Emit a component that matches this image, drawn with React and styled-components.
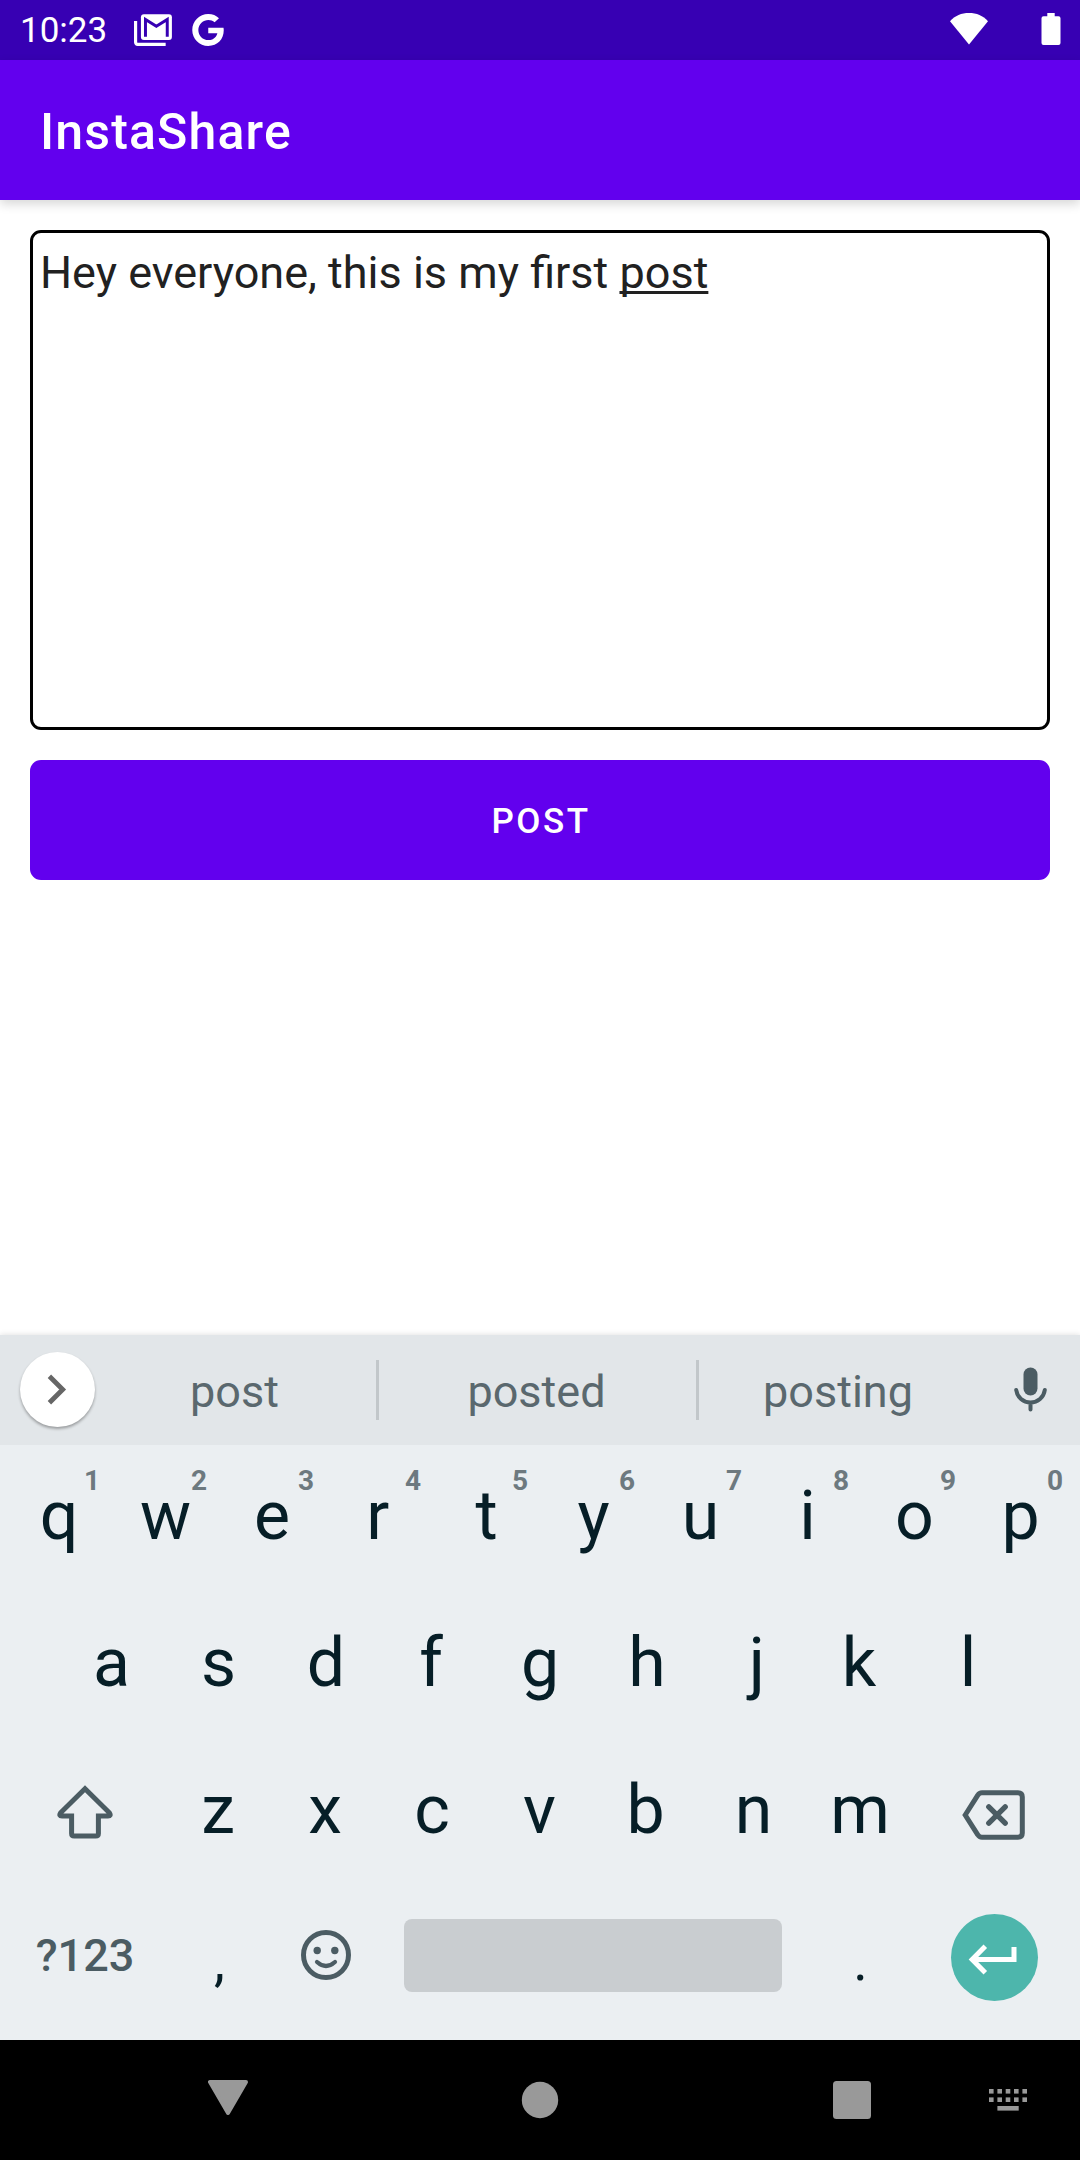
import React from "react";
import styled, { createGlobalStyle } from "styled-components";

const Global = createGlobalStyle`
  *, *::before, *::after { box-sizing: border-box; }
  html, body { margin: 0; padding: 0; }
  body { background: #fff; font-family: Roboto, "Liberation Sans", sans-serif; }
  svg { display: block; flex: none; }
  button { border: 0; margin: 0; padding: 0; background: none; font: inherit; color: inherit; }
`;

const Screen = styled.div`
  width: 1080px;
  height: 2160px;
  display: flex;
  flex-direction: column;
  background: #fff;
  overflow: hidden;
`;

const StatusBar = styled.header`
  height: 60px;
  flex: none;
  display: flex;
  align-items: center;
  justify-content: space-between;
  padding: 0 19px 0 20px;
  background: #3700b3;
  color: #fff;
`;

const StatusGroup = styled.div`
  display: flex;
  align-items: center;
  gap: ${(p) => p.$gap}px;
  padding-bottom: ${(p) => p.$lift || 0}px;
`;

const Clock = styled.span`
  width: 94px;
  font-size: 35px;
  line-height: 60px;
  padding-top: 2px;
`;

const AppBar = styled.div`
  height: 140px;
  flex: none;
  display: flex;
  align-items: center;
  padding: 4px 40px 0;
  background: #6200ee;
  color: #fff;
  box-shadow: 0 4px 10px rgba(0, 0, 0, 0.16);
`;

const Title = styled.h1`
  margin: 0;
  font-size: 50px;
  line-height: 60px;
  font-weight: 500;
  letter-spacing: 1.15px;
`;

const Content = styled.main`
  flex: 1;
  display: flex;
  flex-direction: column;
  gap: 30px;
  padding: 30px;
`;

const PostInput = styled.div`
  height: 500px;
  padding: 10px 7px;
  border: 3px solid #000;
  border-radius: 11px;
  color: #212121;
  font-size: 45px;
  line-height: 60px;
`;

const Composing = styled.span`
  text-decoration: underline;
  text-decoration-thickness: 2.5px;
  text-underline-offset: 3px;
  text-decoration-skip-ink: none;
`;

const PostButton = styled.button`
  height: 120px;
  padding: 4px 0 0 2px;
  border-radius: 11px;
  background: #6200ee;
  color: #fff;
  font-size: 35px;
  font-weight: 500;
  letter-spacing: 2.5px;
  line-height: 40px;
`;

const Keyboard = styled.section`
  flex: none;
  height: 705px;
  background: #ebeff2;
  box-shadow: 0 0 6px rgba(0, 0, 0, 0.14);
`;

const SuggestionStrip = styled.div`
  height: 110px;
  display: grid;
  grid-template-columns: 75px 281px 3px 317px 3px 278px 106px;
  align-items: center;
  padding-left: 20px;
  background: #e2e6e9;
`;

const ExpandButton = styled.button`
  width: 75px;
  height: 75px;
  margin-bottom: 1px;
  border-radius: 50%;
  background: #fff;
  box-shadow: 0 2px 3px rgba(0, 0, 0, 0.32);
`;

const Suggestion = styled.button`
  height: 110px;
  padding: 3px ${(p) => p.$trail || 0}px 0 0;
  color: #5a686e;
  font-size: 45px;
  line-height: 60px;
`;

const Divider = styled.span`
  height: 60px;
  background: #c2c7ca;
`;

const MicButton = styled.button`
  display: grid;
  justify-content: center;
  padding-bottom: 2px;
`;

const KeyRow = styled.div`
  height: 147px;
  display: flex;
  padding: 0 ${(p) => p.$inset || 5}px;
`;

const KeyCap = styled.button`
  position: relative;
  width: ${(p) => p.$w || 107}px;
  height: 147px;
  flex: none;
  display: flex;
  justify-content: center;
  align-items: flex-start;
  padding-left: ${(p) => (p.$nudge > 0 ? p.$nudge * 2 : 0)}px;
  padding-right: ${(p) => (p.$nudge < 0 ? p.$nudge * -2 : 0)}px;
  color: #061e27;
  font-size: 68px;
  line-height: 142px;
`;

const PunctuationKey = styled(KeyCap)`
  font-size: 55px;
  line-height: 150px;
`;

const Hint = styled.sup`
  position: absolute;
  top: 19px;
  left: 75px;
  width: 24px;
  text-align: center;
  color: #6d797f;
  font-size: 28px;
  font-weight: 700;
  line-height: 33px;
`;

const ActionKey = styled(KeyCap)`
  align-items: center;
  padding-top: ${(p) => p.$drop || 0}px;
  padding-bottom: ${(p) => p.$lift || 0}px;
  color: #4b5c63;
  font-size: 45px;
  font-weight: 500;
  line-height: 60px;
`;

const SpaceBar = styled.span`
  width: 378px;
  height: 73px;
  border-radius: 8px;
  background: #c9cdd0;
`;

const EnterDisc = styled.span`
  width: 87px;
  height: 87px;
  border-radius: 50%;
  background: #4db6ac;
`;

const NavBar = styled.nav`
  height: 120px;
  flex: none;
  display: grid;
  grid-template-columns: 72px 312px 312px 312px 72px;
  align-items: center;
  background: #000;
  color: #999;
`;

const NavButton = styled.button`
  display: grid;
  justify-content: center;
  grid-column: ${(p) => p.$col};
`;

const NavTail = styled.div`
  grid-column: 5;
  margin-left: -19px;
`;

const GmailStack = () => (
  <svg width="38" height="32" viewBox="0 0 38.400 32">
    <path d="M1.6 7V28.5a2 2 0 0 0 2 2H32" fill="none" stroke="#fff" strokeWidth="3.2" />
    <rect x="7" width="31.3" height="26" rx="3" fill="#fff" />
    <path d="M11.6 22.8V5.4L22.6 12.2L33.6 5.4V22.8" fill="none" stroke="#3700b3" strokeWidth="3" />
  </svg>
);

const GoogleG = () => (
  <svg width="32" height="32" viewBox="0 8 488 496">
    <path
      fill="#fff"
      d="M488 261.8C488 403.3 391.1 504 248 504 110.8 504 0 393.2 0 256S110.8 8 248 8c66.8 0 123 24.5 166.3 64.9l-67.5 64.9C258.5 52.6 94.3 116.6 94.3 256c0 86.5 69.1 156.6 153.7 156.6 98.2 0 135-70.4 140.8-106.9H248v-85.3h236.1c2.3 12.7 3.9 24.9 3.9 41.4z"
    />
  </svg>
);

const Wifi = () => (
  <svg width="38" height="34" viewBox="0 0 38 34">
    <path d="M0 9.2C5 3.6 11.5 1 19 1s14 2.6 19 8.2L19 32.6Z" fill="#fff" />
  </svg>
);

const Battery = () => (
  <svg width="20" height="32" viewBox="0 0 20 32">
    <path
      d="M6.3 0h7.4v3.3h3.8a2 2 0 0 1 2 2V30a2 2 0 0 1-2 2h-15a2 2 0 0 1-2-2V5.3a2 2 0 0 1 2-2h3.8z"
      fill="#fff"
    />
  </svg>
);

const Chevron = () => (
  <svg width="75" height="75" viewBox="0 0 75 75">
    <path d="M29.400 24.200L42.700 37.500L29.400 50.800" fill="none" stroke="#666" strokeWidth="4.800" />
  </svg>
);

const Mic = () => (
  <svg width="33" height="45" viewBox="0 0 33 45">
    <rect x="9.5" y="0.5" width="14" height="28" rx="7" fill="#4b5c63" />
    <path
      d="M2.2 23c1 7.500 7 12.500 14.300 12.500S29.800 30.500 30.800 23M16.500 35.500V42.400"
      fill="none"
      stroke="#4b5c63"
      strokeWidth="4"
      strokeLinecap="round"
    />
  </svg>
);

const Shift = () => (
  <svg width="56" height="55" viewBox="0 0 56 55">
    <path
      d="M28 3.800L3.600 27.800q-2.100 3.200 1.400 3.200H14.600V48.400q0 2.600 2.600 2.600H38.800q2.600 0 2.600-2.600V31H51q3.500 0 1.400-3.200Z"
      fill="none"
      stroke="#4b5c63"
      strokeWidth="5"
    />
  </svg>
);

const Backspace = () => (
  <svg width="63" height="50" viewBox="0 0 63 50">
    <path
      d="M3.200 25L15.800 5.200Q17.300 2.700 20 2.700H56Q60.300 2.700 60.300 7V43Q60.300 47.300 56 47.300H20Q17.300 47.300 15.800 44.800Z"
      fill="none"
      stroke="#4b5c63"
      strokeWidth="5"
    />
    <path d="M26.800 16.800L43.200 33.200M43.200 16.800L26.800 33.200" stroke="#4b5c63" strokeWidth="5.400" strokeLinecap="round" />
  </svg>
);

const Smile = () => (
  <svg width="50" height="50" viewBox="0 0 50 50">
    <circle cx="25" cy="25" r="22.5" fill="none" stroke="#4b5c63" strokeWidth="5" />
    <circle cx="16.2" cy="20.5" r="3.7" fill="#4b5c63" />
    <circle cx="33.8" cy="20.5" r="3.7" fill="#4b5c63" />
    <path d="M16 32Q25 40 34 32" fill="none" stroke="#4b5c63" strokeWidth="4.200" strokeLinecap="round" />
  </svg>
);

const EnterArrow = () => (
  <svg width="87" height="87" viewBox="0 0 87 87">
    <path d="M63 33V45.500H22M34.300 32.300L21.200 45.500L34.300 58.700" fill="none" stroke="#fff" strokeWidth="5" />
  </svg>
);

const BackTriangle = () => (
  <svg width="40" height="40" viewBox="0 0 40 40">
    <path d="M2 2H38L20 33Z" fill="#999" stroke="#999" strokeWidth="4" strokeLinejoin="round" />
  </svg>
);

const HomeCircle = () => (
  <svg width="38" height="38" viewBox="0 0 38 38">
    <circle cx="19" cy="19" r="18.2" fill="#999" />
  </svg>
);

const RecentSquare = () => (
  <svg width="38" height="38" viewBox="0 0 38 38">
    <rect width="38" height="38" rx="3.5" fill="#999" />
  </svg>
);

const KeyboardSwitch = () => (
  <svg width="38" height="22" viewBox="0 0 38 22">
    {[0, 8.4].map((y) =>
      [0, 8.4, 16.7, 25, 33.4].map((x) => (
        <rect key={`${x}-${y}`} x={x} y={y} width="4.6" height="4.6" fill="#999" />
      ))
    )}
    <rect x="8.4" y="17" width="21.3" height="4.6" fill="#999" />
  </svg>
);

const TOP_ROW = ["q", "w", "e", "r", "t", "y", "u", "i", "o", "p"];
const HOME_ROW = ["a", "s", "d", "f", "g", "h", "j", "k", "l"];
const LOWER_ROW = ["z", "x", "c", "v", "b", "n", "m"];

// Optical centring: letters whose ink is off-centre within their advance width.
const NUDGE = { q: 0.7, e: -0.6, r: -1.8, p: -1, a: -0.5, s: -0.5, f: -2, j: 3, k: -2, z: -0.5, x: -0.5, c: -0.5, b: -1, m: -0.5 };

export default function App() {
  return (
    <Screen>
      <Global />
      <StatusBar>
        <StatusGroup $gap={20}>
          <Clock>10:23</Clock>
          <GmailStack />
          <GoogleG />
        </StatusGroup>
        <StatusGroup $gap={53} $lift={2}>
          <Wifi />
          <Battery />
        </StatusGroup>
      </StatusBar>
      <AppBar>
        <Title>InstaShare</Title>
      </AppBar>
      <Content>
        <PostInput>
          Hey everyone, this is my first <Composing>post</Composing>
        </PostInput>
        <PostButton>POST</PostButton>
      </Content>
      <Keyboard>
        <SuggestionStrip>
          <ExpandButton aria-label="Expand">
            <Chevron />
          </ExpandButton>
          <Suggestion $trail={2}>post</Suggestion>
          <Divider />
          <Suggestion $trail={2}>posted</Suggestion>
          <Divider />
          <Suggestion>posting</Suggestion>
          <MicButton aria-label="Voice input">
            <Mic />
          </MicButton>
        </SuggestionStrip>
        <KeyRow>
          {TOP_ROW.map((k, i) => (
            <KeyCap key={k} $nudge={NUDGE[k]}>
              {k}
              <Hint>{(i + 1) % 10}</Hint>
            </KeyCap>
          ))}
        </KeyRow>
        <KeyRow $inset={58.5}>
          {HOME_ROW.map((k) => (
            <KeyCap key={k} $nudge={NUDGE[k]}>
              {k}
            </KeyCap>
          ))}
        </KeyRow>
        <KeyRow>
          <ActionKey $w={160} aria-label="Shift">
            <Shift />
          </ActionKey>
          {LOWER_ROW.map((k) => (
            <KeyCap key={k} $nudge={NUDGE[k]}>
              {k}
            </KeyCap>
          ))}
          <ActionKey $w={160} $drop={4} $nudge={-1} aria-label="Backspace">
            <Backspace />
          </ActionKey>
        </KeyRow>
        <KeyRow>
          <ActionKey $w={160} $lift={7}>
            ?123
          </ActionKey>
          <PunctuationKey $nudge={1}>,</PunctuationKey>
          <ActionKey aria-label="Emoji" $lift={9}>
            <Smile />
          </ActionKey>
          <ActionKey $w={428} $lift={8} aria-label="Space">
            <SpaceBar />
          </ActionKey>
          <PunctuationKey>.</PunctuationKey>
          <ActionKey $w={160} $lift={4} aria-label="Enter">
            <EnterDisc>
              <EnterArrow />
            </EnterDisc>
          </ActionKey>
        </KeyRow>
      </Keyboard>
      <NavBar>
        <NavButton $col={2} aria-label="Back">
          <BackTriangle />
        </NavButton>
        <NavButton $col={3} aria-label="Home">
          <HomeCircle />
        </NavButton>
        <NavButton $col={4} aria-label="Recents">
          <RecentSquare />
        </NavButton>
        <NavTail>
          <KeyboardSwitch />
        </NavTail>
      </NavBar>
    </Screen>
  );
}
